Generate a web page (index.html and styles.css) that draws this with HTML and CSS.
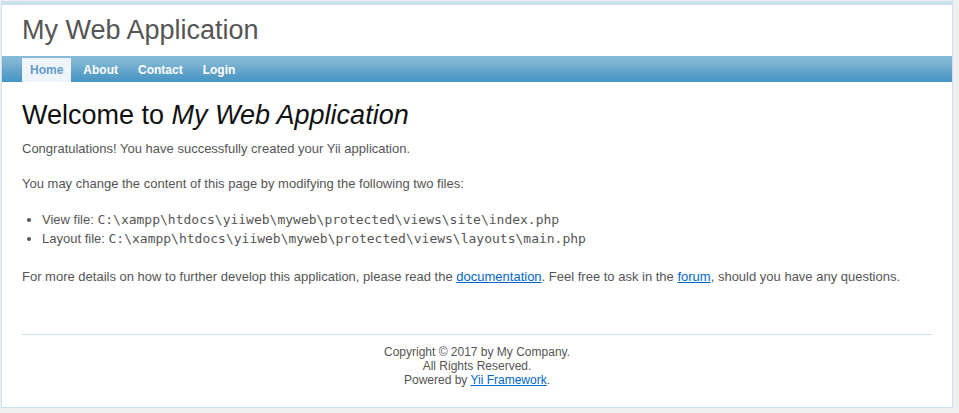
FILE: index.html
```html
<!DOCTYPE html>
<html lang="en">
<head>
<meta charset="utf-8">
<title>My Web Application</title>
<link rel="stylesheet" href="styles.css">
</head>
<body>
<div class="page">
  <header class="header">My Web Application</header>
  <nav class="mainmenu">
    <a class="active" href="#">Home</a>
    <a href="#">About</a>
    <a href="#">Contact</a>
    <a href="#">Login</a>
  </nav>
  <main class="content">
    <h1>Welcome to <i>My Web Application</i></h1>
    <p>Congratulations! You have successfully created your Yii application.</p>
    <p>You may change the content of this page by modifying the following two files:</p>
    <ul>
      <li>View file: <code>C:\xampp\htdocs\yiiweb\myweb\protected\views\site\index.php</code></li>
      <li>Layout file: <code>C:\xampp\htdocs\yiiweb\myweb\protected\views\layouts\main.php</code></li>
    </ul>
    <p>For more details on how to further develop this application, please read the <a href="#">documentation</a>. Feel free to ask in the <a href="#">forum</a>, should you have any questions.</p>
  </main>
  <footer class="footer">
    Copyright &copy; 2017 by My Company.<br>
    All Rights Reserved.<br>
    Powered by <a href="#">Yii Framework</a>.
  </footer>
</div>
</body>
</html>
```
FILE: styles.css
```css
body {
  margin: 0;
  padding: 1px 6px 5px 1px;
  background: #efefef;
  color: #555;
  font: 13px/20px "Liberation Sans", Arial, sans-serif;
}

a {
  color: #06c;
}

.page {
  background: #fff;
  border: 1px solid #c9e0ed;
  border-top-width: 4px;
}

.header {
  padding: 8px 20px 9px;
  font-size: 27px;
  line-height: 34px;
}

.mainmenu {
  display: flex;
  gap: 4px;
  padding: 2px 20px 0;
  background: linear-gradient(#87bbd8, #7db4d3 25%, #5a9fc8 70%, #4596c3);
}

.mainmenu a {
  padding: 0 8px;
  color: #fff;
  font-size: 12px;
  font-weight: bold;
  line-height: 24px;
  text-decoration: none;
}

.mainmenu .active {
  background: #eff4fa;
  color: #6399cd;
}

.content {
  padding: 15px 20px 47px;
}

h1 {
  margin: 0 0 6px;
  color: #111;
  font-size: 27px;
  font-weight: normal;
  line-height: 36px;
}

p {
  margin: 0 0 15px;
}

ul {
  margin: 16px 0 19px;
  padding-left: 20px;
  line-height: 19px;
}

.content p:last-child {
  margin: 0;
}

code {
  font: 13px "DejaVu Sans Mono", monospace;
}

.footer {
  margin: 0 20px;
  padding: 10px 0 20px;
  border-top: 1px solid #c9e0ed;
  font-size: 12px;
  line-height: 14px;
  text-align: center;
}
```
